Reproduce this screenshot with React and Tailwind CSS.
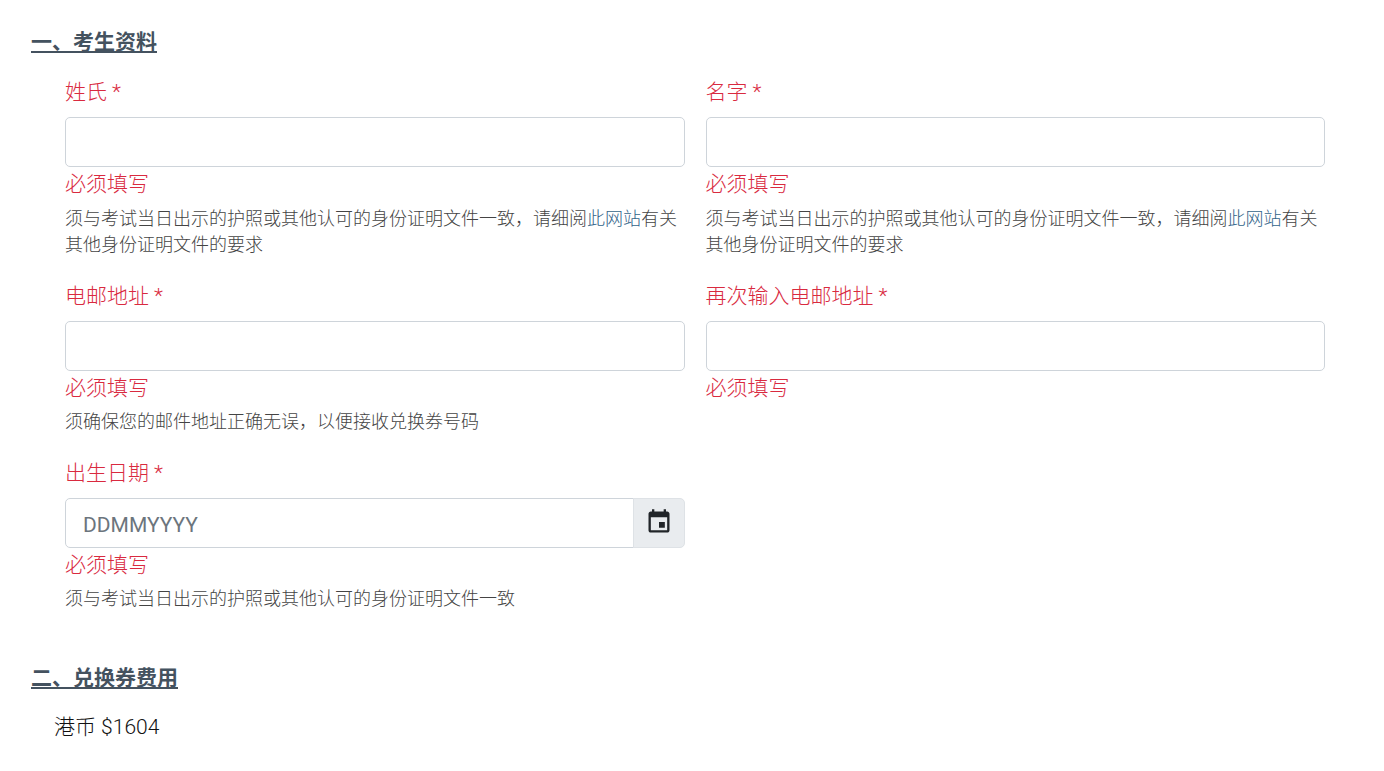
const font = "[font-family:'Roboto','Noto_Sans_CJK_SC',sans-serif]";

function Field({ label, hint }) {
  return (
    <div className="pb-[21px]">
      <label className="block text-[21px] leading-[32px] font-light text-[#d92a3f] mb-[9px]">
        {label} *
      </label>
      <input
        type="text"
        className="block w-full h-[50px] bg-white border border-[#ced4da] rounded-[5px]"
      />
      <div className="pt-px text-[21px] leading-[32px] font-light text-[#d92a3f]">必须填写</div>
      {hint && (
        <div className="mt-[5.5px] text-[18px] leading-[26.5px] font-light text-[#444]">{hint}</div>
      )}
    </div>
  );
}

function NameHint() {
  return (
    <>
      须与考试当日出示的护照或其他认可的身份证明文件一致，请细阅
      <a href="#" className="text-[#33658a]">此网站</a>
      有关
      <br />
      其他身份证明文件的要求
    </>
  );
}

function CalendarIcon() {
  return (
    <svg width="28" height="28" viewBox="0 0 24 24" fill="#212529" className="-mt-px">
      <path d="M17 12h-5v5h5v-5zM16 1v2H8V1H6v2H5c-1.11 0-1.99.9-1.99 2L3 19c0 1.1.89 2 2 2h14c1.1 0 2-.9 2-2V5c0-1.1-.9-2-2-2h-1V1h-2zm3 18H5V8h14v11z" />
    </svg>
  );
}

export default function App() {
  return (
    <div className={`${font} bg-white min-h-[771px] w-[1384px] overflow-hidden text-[#212529]`}>
      <div className="pl-[31px] pt-[26px] pb-[18px]">
        <h2 className="text-[21px] leading-[32px] font-bold underline text-[#44525f]">
          一、考生资料
        </h2>
      </div>
      <div className="pl-[65px] w-[1325px] grid grid-cols-2 gap-x-[21px]">
        <Field label="姓氏" hint={<NameHint />} />
        <Field label="名字" hint={<NameHint />} />
        <Field label="电邮地址" hint="须确保您的邮件地址正确无误，以便接收兑换券号码" />
        <Field label="再次输入电邮地址" />
        <div>
          <label className="block text-[21px] leading-[32px] font-light text-[#d92a3f] mb-[9px]">
            出生日期 *
          </label>
          <div className="flex h-[50px]">
            <input
              type="text"
              placeholder="DDMMYYYY"
              className="flex-1 min-w-0 bg-white border border-[#ced4da] rounded-l-[5px] px-[17px] pt-[6px] text-[21px] text-[#555] placeholder:text-[#6c757d]"
            />
            <div className="w-[52px] -ml-px flex items-center justify-center bg-[#e9ecef] border border-[#dee2e6] rounded-r-[5px]">
              <CalendarIcon />
            </div>
          </div>
          <div className="pt-px text-[21px] leading-[32px] font-light text-[#d92a3f]">必须填写</div>
          <div className="mt-[5.5px] text-[18px] leading-[26.5px] font-light text-[#444]">
            须与考试当日出示的护照或其他认可的身份证明文件一致
          </div>
        </div>
      </div>
      <div className="pl-[31px] pt-[49px]">
        <h2 className="text-[21px] leading-[32px] font-bold underline text-[#44525f]">
          二、兑换券费用
        </h2>
        <div className="pl-[23px] mt-[17px] text-[21px] leading-[32px] font-light text-[#111]">
          港币 $1604
        </div>
      </div>
    </div>
  );
}
